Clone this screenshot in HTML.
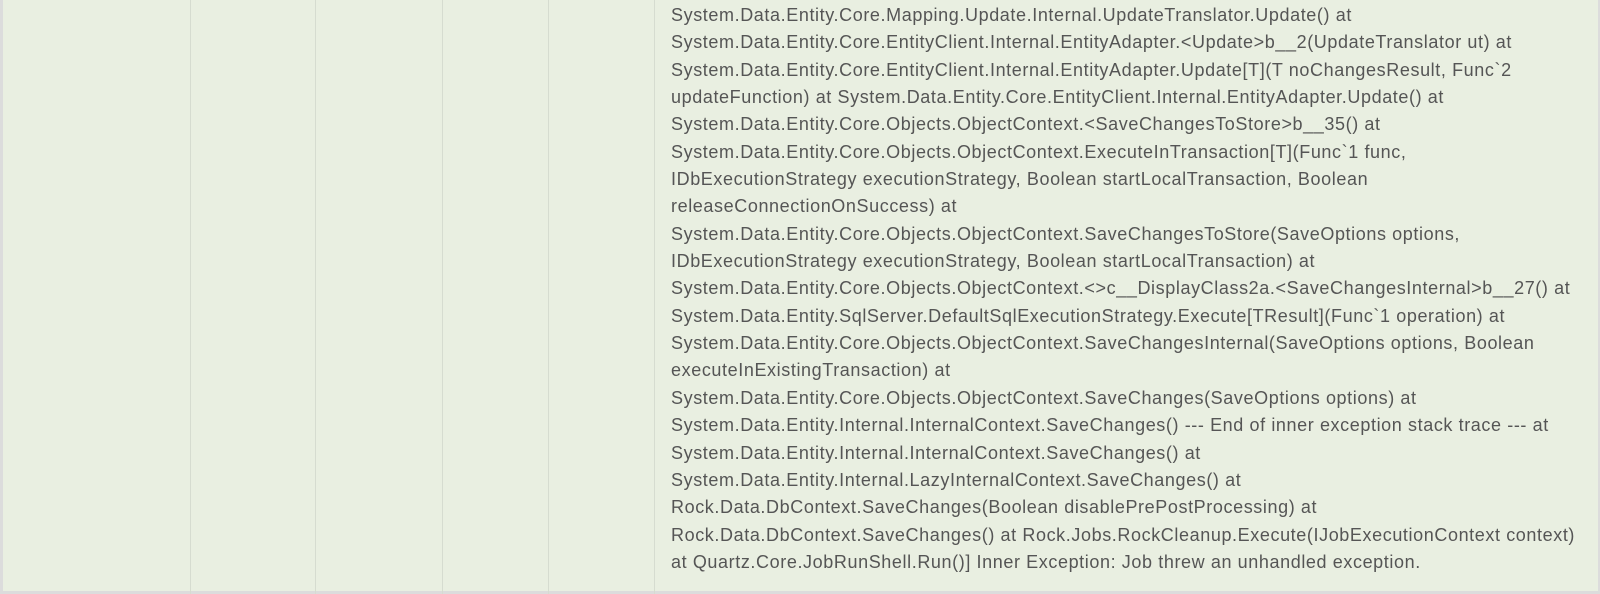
<!DOCTYPE html>
<html><head><style>
html,body{margin:0;padding:0}
body{width:1600px;height:594px;overflow:hidden;background:#e9efe1;position:relative;font-family:"Liberation Sans",sans-serif}
.b{position:absolute;top:0;bottom:0;width:1px;background:#d6dcd0}
#lb{position:absolute;left:0;top:0;bottom:0;width:3px;background:#dcdcdc}
#bb{position:absolute;left:0;right:0;bottom:0;height:3px;background:#dcdcdc}
#rb{position:absolute;right:0;top:0;bottom:0;width:2px;background:#dcdcdc}
.t{position:absolute;left:671px;top:2px;font-size:18px;letter-spacing:0.6px;line-height:27.35px;color:#555;white-space:nowrap}
</style></head><body>
<div id="lb"></div><div id="rb"></div><div id="bb"></div>
<div class="b" style="left:190px"></div>
<div class="b" style="left:315px"></div>
<div class="b" style="left:442px"></div>
<div class="b" style="left:548px"></div>
<div class="b" style="left:654px"></div>
<div class="t">System.Data.Entity.Core.Mapping.Update.Internal.UpdateTranslator.Update() at<br>
System.Data.Entity.Core.EntityClient.Internal.EntityAdapter.&lt;Update&gt;b__2(UpdateTranslator ut) at<br>
System.Data.Entity.Core.EntityClient.Internal.EntityAdapter.Update[T](T noChangesResult, Func`2<br>
updateFunction) at System.Data.Entity.Core.EntityClient.Internal.EntityAdapter.Update() at<br>
System.Data.Entity.Core.Objects.ObjectContext.&lt;SaveChangesToStore&gt;b__35() at<br>
System.Data.Entity.Core.Objects.ObjectContext.ExecuteInTransaction[T](Func`1 func,<br>
IDbExecutionStrategy executionStrategy, Boolean startLocalTransaction, Boolean<br>
releaseConnectionOnSuccess) at<br>
System.Data.Entity.Core.Objects.ObjectContext.SaveChangesToStore(SaveOptions options,<br>
IDbExecutionStrategy executionStrategy, Boolean startLocalTransaction) at<br>
System.Data.Entity.Core.Objects.ObjectContext.&lt;&gt;c__DisplayClass2a.&lt;SaveChangesInternal&gt;b__27() at<br>
System.Data.Entity.SqlServer.DefaultSqlExecutionStrategy.Execute[TResult](Func`1 operation) at<br>
System.Data.Entity.Core.Objects.ObjectContext.SaveChangesInternal(SaveOptions options, Boolean<br>
executeInExistingTransaction) at<br>
System.Data.Entity.Core.Objects.ObjectContext.SaveChanges(SaveOptions options) at<br>
System.Data.Entity.Internal.InternalContext.SaveChanges() --- End of inner exception stack trace --- at<br>
System.Data.Entity.Internal.InternalContext.SaveChanges() at<br>
System.Data.Entity.Internal.LazyInternalContext.SaveChanges() at<br>
Rock.Data.DbContext.SaveChanges(Boolean disablePrePostProcessing) at<br>
Rock.Data.DbContext.SaveChanges() at Rock.Jobs.RockCleanup.Execute(IJobExecutionContext context)<br>
at Quartz.Core.JobRunShell.Run()] Inner Exception: Job threw an unhandled exception.</div>
</body></html>
